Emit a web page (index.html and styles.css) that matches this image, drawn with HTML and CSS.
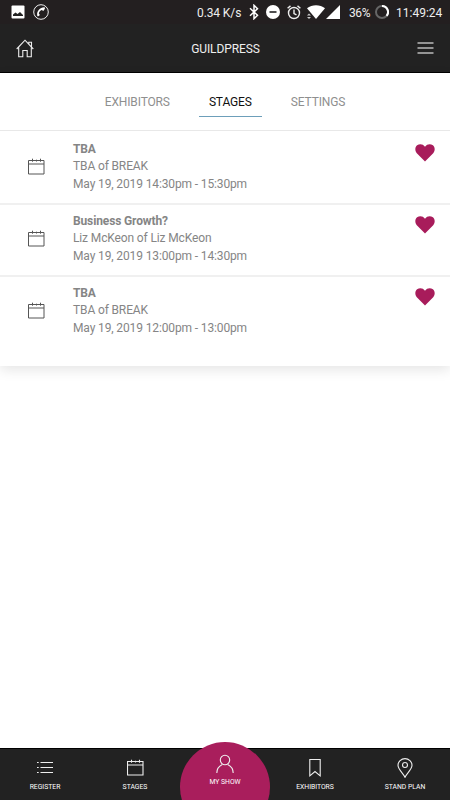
FILE: index.html
```html
<!DOCTYPE html>
<html lang="en">
<head>
<meta charset="utf-8">
<title>Guildpress</title>
<link rel="stylesheet" href="styles.css">
</head>
<body>
<svg class="defs" aria-hidden="true">
  <symbol id="calendar" viewBox="0 0 17 17"><path d="M.5 2.500h15.500v13.500H.5zM.5 6h15.500M4.500.7v3M8.500 1.700v1.800M12.500.7v3"/></symbol>
  <symbol id="heart" viewBox="0 0 20 18"><path d="M10 17.600 1.800 9.200C-.4 6.700 0 3 2.100 1.300 4.500-.5 8-.2 10 2.700 12-.2 15.500-.5 17.900 1.300 20 3 20.400 6.700 18.200 9.200z"/></symbol>
</svg>
<div class="app">
  <div class="status">
    <svg class="s-photo" width="14" height="14" viewBox="0 0 14 14"><rect x=".5" y=".5" width="13" height="13" rx="1" fill="#fff"/><path d="M2 11V9.500L4.500 7.500l2 1.500L9 7l3 3v1z" fill="#222"/></svg>
    <svg class="s-call" width="16" height="16" viewBox="0 0 16 16"><circle cx="8" cy="8" r="7.300" fill="none" stroke="#eee" stroke-width="1"/><path d="M11.300 3.300C7 3.500 3.600 7 4.200 11.500c.1.900.7 1 1.200.7l1.200-.9c.3-.3.200-.6 0-.9l-.8-1c.4-1.500 1.500-2.700 2.900-3.300l1.300.6c.3.100.6.100.8-.2l.9-1.400c.5-.8.300-1.800-.4-1.800z" fill="#fff"/></svg>
    <span class="s-speed">0.34 K/s</span>
    <svg class="s-bt" width="10" height="16" viewBox="0 0 10 16"><path d="m1 4.300 7.500 7L5 14.700V1.300l3.500 3.400L1 11.700" fill="none" stroke="#fff" stroke-width="1.500"/></svg>
    <svg class="s-dnd" width="14" height="14" viewBox="0 0 14 14"><circle cx="7" cy="7" r="7" fill="#fff"/><path d="M3.500 7h7" stroke="#222" stroke-width="1.600"/></svg>
    <svg class="s-alarm" width="14" height="15" viewBox="0 0 14 15"><g fill="none" stroke="#eee" stroke-width="1.400"><circle cx="7" cy="8" r="5.500"/><path d="M7 4.500V8.500l2.500 1.300M.6 3.300 3.500.9M13.400 3.300 10.500.9"/></g></svg>
    <svg class="s-wifi" width="18" height="14" viewBox="0 0 18 14"><path d="M0 3.300C5-.7 13-.7 18 3.300L9 14z" fill="#fff"/><path d="M0 10.500 2 8.500l2 2zM0 12l2 2 2-2z" fill="#ccc"/></svg>
    <svg class="s-signal" width="14" height="14" viewBox="0 0 14 14"><path d="M14 0v14H0z" fill="#fff"/></svg>
    <span class="s-pct">36%</span>
    <svg class="s-batt" width="14" height="14" viewBox="0 0 14 14"><g fill="none" stroke-width="2"><circle cx="7" cy="7" r="6" stroke="#666"/><path d="M7 1a6 6 0 0 1 4.600 9.900" stroke="#fff"/></g></svg>
    <span class="s-time">11:49:24</span>
  </div>
  <header class="header">
    <svg class="line-icon" width="18" height="19" viewBox="0 0 18 19"><path d="M.7 10 9 1.200l8.300 8.800M2.700 8.500v9.300h4.100v-6.300h4.400v6.300h4.100V8.500M12.800 5V3.300h2.700v4.500"/></svg>
    <h1 class="title">GUILDPRESS</h1>
    <svg class="menu" width="17" height="12" viewBox="0 0 17 12"><path d="M.5 1h16M.5 6h16M.5 11h16"/></svg>
  </header>
  <main class="panel">
    <nav class="tabs">
      <a class="tab">EXHIBITORS</a>
      <a class="tab active">STAGES</a>
      <a class="tab">SETTINGS</a>
    </nav>
    <article class="row">
      <svg class="cal"><use href="#calendar"/></svg>
      <div class="info"><b>TBA</b><span>TBA of BREAK</span><span>May 19, 2019 14:30pm - 15:30pm</span></div>
      <svg class="heart"><use href="#heart"/></svg>
    </article>
    <article class="row">
      <svg class="cal"><use href="#calendar"/></svg>
      <div class="info"><b>Business Growth?</b><span>Liz McKeon of Liz McKeon</span><span>May 19, 2019 13:00pm - 14:30pm</span></div>
      <svg class="heart"><use href="#heart"/></svg>
    </article>
    <article class="row">
      <svg class="cal"><use href="#calendar"/></svg>
      <div class="info"><b>TBA</b><span>TBA of BREAK</span><span>May 19, 2019 12:00pm - 13:00pm</span></div>
      <svg class="heart"><use href="#heart"/></svg>
    </article>
  </main>
  <nav class="bottom">
    <a class="item"><svg class="line-icon" width="18" height="20" viewBox="0 0 18 20"><path d="M4.500 4.500H17M4.500 9.500H17M4.500 14.500H17M1 4.500h1.700M1 9.500h1.700M1 14.500h1.700"/></svg><span>REGISTER</span></a>
    <a class="item"><svg class="line-icon" width="17" height="20" viewBox="0 -1 17 20"><use href="#calendar" width="17" height="17"/></svg><span>STAGES</span></a>
    <a class="item current"><svg class="line-icon" width="20" height="20" viewBox="0 0 20 20"><circle cx="10" cy="6" r="4.700"/><path d="M1.800 19c0-4 2.500-7 5.500-8.500M18.200 19c0-4-2.500-7-5.500-8.500"/></svg><span>MY SHOW</span></a>
    <a class="item"><svg class="line-icon" width="12" height="20" viewBox="0 0 12 20"><path d="M.8 1.500h10.400v16.300L6 13.500.8 17.800z"/></svg><span>EXHIBITORS</span></a>
    <a class="item"><svg class="line-icon" width="16" height="20" viewBox="0 0 16 20"><path d="M8 19.300C6.500 15.500 1 11.500 1 7.300a7 6.700 0 0 1 14 0C15 11.500 9.500 15.500 8 19.300z"/><circle cx="8" cy="7" r="2.500"/></svg><span>STAND PLAN</span></a>
  </nav>
</div>
</body>
</html>
```
FILE: styles.css
```css
* { box-sizing: border-box; }
body { margin: 0; background: #fff; font-family: Roboto, "Liberation Sans", sans-serif; }
svg { display: block; flex: none; }
.defs { position: absolute; width: 0; height: 0; }
.app { height: 800px; display: flex; flex-direction: column; overflow: hidden; }
.status { height: 24px; flex: none; display: flex; align-items: center; padding-left: 11px; background: #231f20; color: #eee; font-size: 12px; line-height: 24px; white-space: nowrap; }
.status span { flex: none; padding-top: 1px; }
.s-call { margin-left: 8px; }
.s-speed { width: 46px; margin-left: 148px; letter-spacing: -.1px; }
.s-bt { margin-left: 6px; }
.s-dnd { margin-left: 7px; }
.s-alarm { margin-left: 7px; }
.s-wifi { margin-left: 6px; }
.s-signal { margin-left: 1px; }
.s-pct { width: 22px; margin-left: 9px; letter-spacing: -.4px; }
.s-batt { margin-left: 4px; }
.s-time { margin-left: 7px; }
.header { height: 49px; flex: none; display: grid; grid-template-columns: 18px 1fr 17px; align-items: center; padding: 0 16px; background: #222; border-bottom: 1px solid #000; }
.title { margin: 0; padding-top: 1px; text-align: center; font-size: 12px; font-weight: 400; color: #eee; letter-spacing: -.1px; }
.line-icon { fill: none; stroke: #eee; stroke-width: 1.100; }
.menu { stroke: #bbb; stroke-width: 1.500; }
.panel { height: 293px; flex: none; background: #fff; box-shadow: 0 4px 12px rgba(0, 0, 0, .1); }
.tabs { height: 58px; display: flex; justify-content: center; align-items: flex-start; padding-top: 13px; border-bottom: 1px solid #e8e8e8; }
.tab { height: 31px; padding: 1px 10px 0; margin: 0 9.500px; border-bottom: 1px solid transparent; font-size: 12px; letter-spacing: -.14px; line-height: 30px; color: #8f8f8f; }
.tab.active { color: #111; border-color: #6d9fba; }
.row { height: 72px; display: grid; grid-template-columns: 73px 1fr 20px; align-items: start; padding: 10px 15px 0 0; }
.row + .row { padding-top: 8px; border-top: 2px solid #f0f0f0; }
.cal { width: 17px; height: 17px; margin: 17px 0 0 28px; fill: none; stroke: #555; stroke-width: 1; }
.info { display: flex; flex-direction: column; color: #858585; font-size: 12px; letter-spacing: -.13px; line-height: 17.300px; white-space: nowrap; }
.info b { font-weight: 700; }
.heart { width: 20px; height: 18px; margin-top: 3px; fill: #a81c5b; }
.bottom { height: 52px; flex: none; display: grid; grid-template-columns: repeat(5, 1fr); margin-top: auto; position: relative; background: #222; border-top: 1px solid #000; }
.item { display: flex; flex-direction: column; align-items: center; position: relative; padding-top: 9px; color: #fff; font-size: 6.800px; line-height: 9px; white-space: nowrap; }
.item span { margin-top: 5px; }
.item.current { width: 90px; height: 90px; margin-top: -7px; padding-top: 12px; border-radius: 50%; background: #a91e5c; }
.item.current span { margin-top: 4px; }
```
